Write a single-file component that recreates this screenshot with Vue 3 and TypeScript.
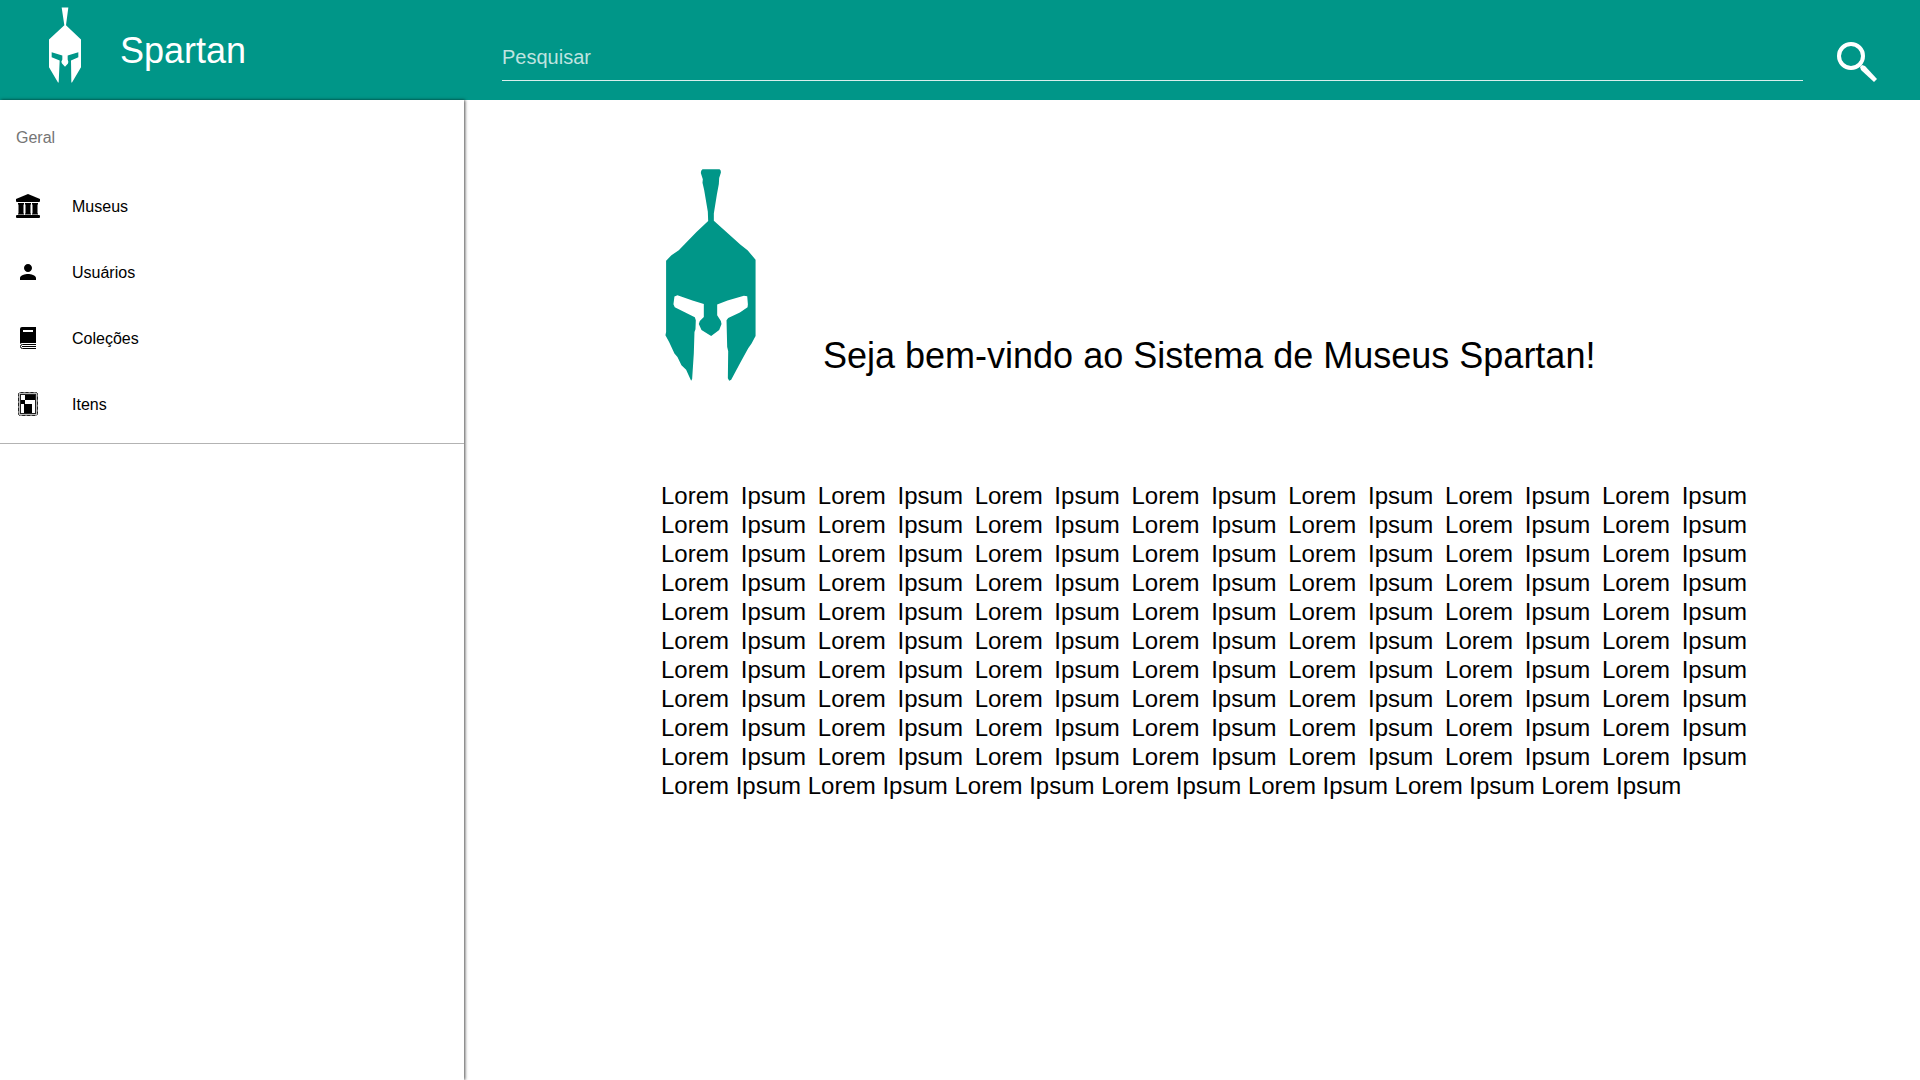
<script setup lang="ts">
import { ref } from 'vue'

type IconName = 'museum' | 'user' | 'book' | 'frame'

interface NavItem {
  label: string
  icon: IconName
}

const query = ref('')

const items: NavItem[] = [
  { label: 'Museus', icon: 'museum' },
  { label: 'Usuários', icon: 'user' },
  { label: 'Coleções', icon: 'book' },
  { label: 'Itens', icon: 'frame' },
]

const intro = Array(77).fill('Lorem Ipsum').join(' ')
</script>

<template>
  <div class="app">
    <header class="toolbar">
      <a class="brand" href="#">
        <svg class="brand-logo" viewBox="147 23 96 227" aria-hidden="true">
          <path
            d="M185 24H205L198 77L243 120V203L216 249H214L213 183L235 173V158L203 168V180L205 187L204 192L195 202L186 192L184 187L187 180V168L155 158V173L179 183L176 249H174L147 203V120L193 77Z"
          />
        </svg>
        <span>Spartan</span>
      </a>
      <form class="search" role="search" @submit.prevent>
        <input v-model="query" class="search-input" type="search" placeholder="Pesquisar" aria-label="Pesquisar" />
        <button class="search-button" type="submit" aria-label="Buscar">
          <svg viewBox="0 0 40 40" aria-hidden="true">
            <circle cx="14" cy="14" r="12" fill="none" stroke="#fff" stroke-width="4" />
            <path d="M23 25L25 23L28 24L40 37L37 40L24 28Z" fill="#fff" />
          </svg>
        </button>
      </form>
    </header>

    <div class="body">
      <aside class="sidebar">
        <nav class="nav" aria-labelledby="nav-title">
          <h2 id="nav-title" class="nav-title">Geral</h2>
          <ul class="nav-list">
            <li v-for="item in items" :key="item.label">
              <a class="nav-link" href="#">
                <svg class="nav-icon" viewBox="0 0 24 24" aria-hidden="true">
                  <g v-if="item.icon === 'museum'">
                    <path d="M12 0L24 5V7Q24 8 23 8H1Q0 8 0 7V5Z" />
                    <path d="M2 9H8V10L7.500 11V19L8 20V20.500H2V20L2.500 19V11L2 10ZM9 9H15V10L14.500 11V19L15 20V20.500H9V20L9.500 19V11L9 10ZM16 9H22V10L21.500 11V19L22 20V20.500H16V20L16.500 19V11L16 10Z" />
                    <rect y="21" width="24" height="3" rx="1" />
                  </g>
                  <path
                    v-else-if="item.icon === 'user'"
                    d="M12 12c2.21 0 4-1.79 4-4s-1.79-4-4-4-4 1.79-4 4 1.79 4 4 4zm0 2c-2.67 0-8 1.34-8 4v2h16v-2c0-2.66-5.330-4-8-4z"
                  />
                  <g v-else-if="item.icon === 'book'">
                    <path fill-rule="evenodd" d="M6 1H20V17H6Q5 17 4 18V3Q4 1 6 1ZM7 4V6H17V4Z" />
                    <path d="M20 18.500H6.500Q4.500 18.500 4.500 20.500T6.500 22.500H20M6 20.500H20" fill="none" stroke="#000" />
                  </g>
                  <g v-else>
                    <rect x="2.500" y="0.500" width="19" height="23" rx="2" fill="none" stroke="#777" />
                    <rect x="2.500" y="0.500" width="19" height="23" rx="2" fill="none" stroke="#222" stroke-dasharray="3 2" />
                    <rect x="3.500" y="1.500" width="17" height="21" fill="none" stroke="#bbb" />
                    <rect x="4.500" y="2.500" width="15" height="19" fill="none" stroke="#222" />
                    <path d="M9 3H19V8H9ZM5 8H9V12H5ZM9 12H16V21H9ZM8 12H9V21H8Z" />
                  </g>
                </svg>
                <span class="nav-label">{{ item.label }}</span>
              </a>
            </li>
          </ul>
        </nav>
      </aside>

      <main class="content">
        <div class="hero">
          <svg class="hero-logo" viewBox="76 57 272 635" aria-hidden="true">
            <path
              d="M188 58H239Q244 61 243 68L238 84L237 102L231 134L222 190V212L302 284L323 300L347 329V557L335 580L325 594L302 636L274 688L268 691L264 684L265 603L262 590L260 510L265 503L300 487L323 471L324 462L322 438L312 437L263 451L232 463V495L243 512L245 521L238 539L214 557L185 539L177 521L180 512L192 500V461L158 451L113 435L104 439L101 462L105 471L165 501L168 510L167 537L164 545L162 610L157 686L154 691L139 658L125 645L113 620L104 610L88 575L77 555L79 545V332L95 315L117 300L170 246L205 213L204 185L193 120L188 98L189 88L183 69Q183 61 188 58Z"
            />
          </svg>
          <h1 class="hero-title">Seja bem-vindo ao Sistema de Museus Spartan!</h1>
        </div>
        <p class="intro">{{ intro }}</p>
      </main>
    </div>
  </div>
</template>

<style>
body {
  margin: 0;
  background: #fff;
}
</style>

<style scoped>
.app {
  display: flex;
  flex-direction: column;
  min-height: 100vh;
  font-family: 'Liberation Sans', Arial, sans-serif;
  font-size: 16px;
  color: #000;
}

.toolbar {
  display: flex;
  height: 100px;
  background: #009688;
  color: #fff;
}

.brand {
  display: flex;
  flex: 0 0 464px;
  box-sizing: border-box;
  gap: 39px;
  padding: 7px 0 0 49px;
  color: inherit;
  font-size: 36px;
  line-height: 88px;
  text-decoration: none;
}

.brand-logo {
  width: 32px;
  height: 76px;
  fill: #fff;
}

.search {
  display: flex;
  flex: 1;
  align-items: flex-start;
  gap: 34px;
  padding: 32px 43px 0 38px;
}

.search-input {
  flex: 1;
  min-width: 0;
  height: 49px;
  box-sizing: border-box;
  padding: 3px 0 0;
  border: 0;
  border-bottom: 1px solid #d9efed;
  border-radius: 0;
  outline: 0;
  background: transparent;
  color: #fff;
  font: inherit;
  font-size: 20px;
  appearance: none;
}

.search-input::placeholder {
  color: rgba(255, 255, 255, 0.75);
  opacity: 1;
}

.search-button {
  width: 40px;
  height: 40px;
  margin-top: 10px;
  padding: 0;
  border: 0;
  background: transparent;
  cursor: pointer;
}

.search-button svg {
  display: block;
}

.body {
  display: flex;
  flex: 1;
}

.sidebar {
  flex: 0 0 464px;
  box-shadow: 1px 0 3px rgba(0, 0, 0, 0.7);
}

.nav {
  padding-bottom: 6px;
  border-bottom: 1px solid #b3b3b3;
}

.nav-title {
  height: 73px;
  margin: 0;
  padding: 0 16px;
  color: #757575;
  font-size: 16px;
  font-weight: 400;
  line-height: 76px;
}

.nav-list {
  margin: 0;
  padding: 0;
  list-style: none;
}

.nav-link {
  display: flex;
  align-items: center;
  gap: 32px;
  height: 66px;
  padding: 0 16px;
  color: #000;
  text-decoration: none;
}

.nav-icon {
  width: 24px;
  height: 24px;
}

.nav-label {
  padding-top: 2px;
}

.content {
  flex: 1;
  min-width: 0;
  padding: 69px 173px 0 197px;
}

.hero {
  display: flex;
  align-items: flex-end;
  gap: 67px;
  padding-left: 4px;
}

.hero-logo {
  flex: none;
  width: 91px;
  height: 212px;
  fill: #009688;
}

.hero-title {
  margin: 0 0 4px;
  font-size: 36px;
  font-weight: 400;
  line-height: 42px;
}

.intro {
  margin: 100px 0 0;
  font-size: 24px;
  line-height: 29px;
  text-align: justify;
}
</style>
